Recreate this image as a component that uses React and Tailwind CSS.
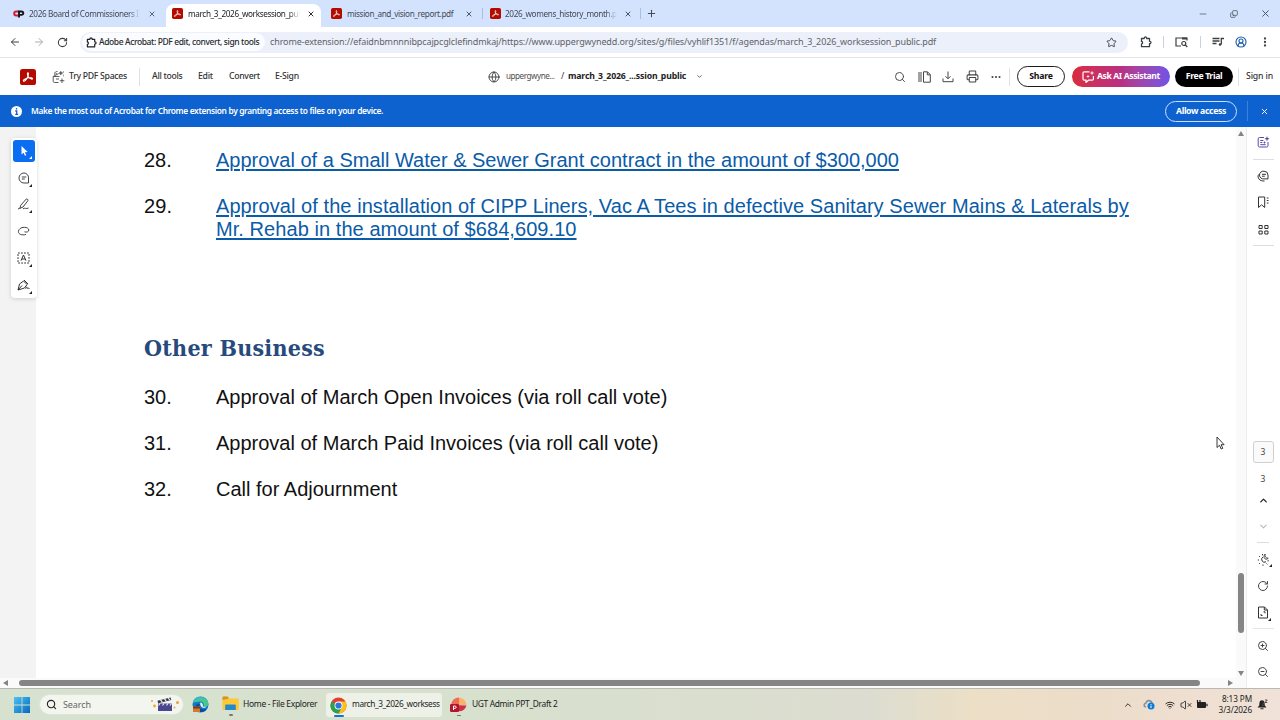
import {
    ArrowLeft, ArrowRight, RotateCw, Star, X, Plus, Minus, Copy, EllipsisVertical, ListMusic, CircleUserRound,
    Globe, ChevronDown, ChevronUp, Search, Download, Printer, Ellipsis, ZoomIn, ZoomOut, Wifi, VolumeX,
} from "lucide-react"

const agenda = [
    { n: "28.", link: true, lines: ["Approval of a Small Water & Sewer Grant contract in the amount of $300,000"] },
    { n: "29.", link: true, wide: true, lines: ["Approval of the installation of CIPP Liners, Vac A Tees in defective Sanitary Sewer Mains & Laterals by", "Mr. Rehab in the amount of $684,609.10"] },
]

const otherBusiness = [
    { n: "30.", lines: ["Approval of March Open Invoices (via roll call vote)"] },
    { n: "31.", lines: ["Approval of March Paid Invoices (via roll call vote)"] },
    { n: "32.", lines: ["Call for Adjournment"] },
]

function AcrobatLogo({ size }) {
    return (
        <svg width={size} height={size} viewBox="0 0 16 16" className="shrink-0">
            <rect width="16" height="16" rx="2.6" fill="#b30b00" />
            <path d="M3.6 12.2c-1.3-.9 2.6-3.1 5.1-3.4 1.8-.2 4 .1 3.8 1-.3 1-2.7-.2-3.9-1.7C7.4 6.6 7 3.7 7.9 3.7c1 0 .6 2.7-.5 4.9-1 2.1-2.9 4.3-3.8 3.6z" fill="none" stroke="#fff" strokeWidth="1.050" />
        </svg>
    )
}

function CpLogo() {
    return (
        <svg width="12" height="8" viewBox="0 0 12 8" className="shrink-0">
            <path d="M5.800 1.500H3.200a2 2 0 0 0 0 4H5" fill="none" stroke="#c8203c" strokeWidth="2" />
            <path d="M6 7.500V1.500h2.600a1.700 1.700 0 0 1 0 3.400H6.500" fill="none" stroke="#161616" strokeWidth="1.900" />
        </svg>
    )
}

function Puzzle({ size, stroke = "#3c4043" }) {
    return (
        <svg width={size} height={size} viewBox="0 0 12 12" fill="none" stroke={stroke} strokeWidth="1.300" strokeLinejoin="round" className="shrink-0">
            <path d="M1.500 2.500h2.700c-.1-2 2.600-2 2.500 0h2.800v2.800c1.900-.1 1.900 2.500 0 2.400v3h-8V8c1.500-.2 1.500-2.400 0-2.600z" />
        </svg>
    )
}

function SpacesIcon() {
    return (
        <svg width="13" height="14" viewBox="0 0 13 14" fill="none" stroke="#4b4b4b" strokeWidth="0.9">
            <path d="M1.200 6.500 6.800 3.500M1.200 6.500v4.700c0 .8.5 1.300 1.300 1.300h4M1.200 6.500h6.300M3 5.300C2 3 3.400 1.700 4.500 1.500h1M4.500 4.400 4 2.800M4 9h3M10 8.500v4.500M7.800 10.700h4.500" />
            <path d="M8.800 1.200l.6 1.400 1.500.5-1.500.5-.6 1.500-.6-1.500-1.200-.5 1.200-.5zM11.400 1v2M11.500 4.500v2" fill="#4b4b4b" strokeWidth="0.5" />
        </svg>
    )
}

function TabTitle({ children, className }) {
    return <span className={"whitespace-nowrap text-[8.200px] leading-[14px] tracking-[-0.37px] " + className}>{children}</span>
}

function TabStrip() {
    return (
        <div className="flex h-[27px] bg-[#d3e2fd] text-[#444a55]">
            <div className="flex items-center w-[166px] pl-[13px]">
                <CpLogo />
                <TabTitle className="ml-1 w-[111px] mask-r-from-90%">2026 Board of Commissioners I</TabTitle>
                <X size={8} strokeWidth={2.500} className="ml-2" />
            </div>
            <div className="flex items-center w-[155px] mt-1 h-[23px] pb-1 pl-[6px] bg-white rounded-t-lg text-[#202124]">
                <AcrobatLogo size={11} />
                <TabTitle className="ml-[5px] w-[112px] mask-r-from-90%">march_3_2026_worksession_pul</TabTitle>
                <X size={8} strokeWidth={2.800} className="ml-[7px]" />
            </div>
            <div className="flex items-center w-[161px] pl-[10px]">
                <AcrobatLogo size={11} />
                <TabTitle className="ml-[5px] w-[114px]">mission_and_vision_report.pdf</TabTitle>
                <X size={8} strokeWidth={2.800} className="ml-1" />
            </div>
            <div className="flex items-center w-[159px] my-2 h-[11px] pl-[7px] border-x border-[#a9bfe8]">
                <AcrobatLogo size={11} />
                <TabTitle className="ml-[4px] w-[112px] mask-r-from-90%">2026_womens_history_month.p</TabTitle>
                <X size={8} strokeWidth={2.800} className="ml-[7px]" />
            </div>
            <Plus size={11} strokeWidth={2.200} className="ml-[5px] mt-2" />
            <div className="ml-auto flex items-center w-[93px] justify-between pr-[9px]">
                <Minus size={10} strokeWidth={1.600} className="ml-[11px]" />
                <Copy size={8} strokeWidth={2.200} className="-scale-x-100 rotate-180" />
                <X size={11} strokeWidth={2} />
            </div>
        </div>
    )
}

function AddressBar() {
    return (
        <div className="flex items-center h-[31px] bg-white border-b border-[#e4e4e4] pl-[9px] text-[#3c4043]">
            <ArrowLeft size={12} strokeWidth={2} />
            <ArrowRight size={12} strokeWidth={2} className="ml-3 text-[#a8abb0]" />
            <RotateCw size={11} strokeWidth={2.300} className="ml-3" />
            <div className="ml-[12px] flex items-center w-[1048px] h-[21px] rounded-full bg-[#ebf0fa] pl-[2px]">
                <div className="flex items-center w-[183px] h-[18px] rounded-full bg-[#fafcff] pl-1 text-[#26282b]">
                    <Puzzle size={11} stroke="#202124" />
                    <span className="ml-[2px] whitespace-nowrap text-[8.500px] font-medium tracking-[-0.400px]">Adobe Acrobat: PDF edit, convert, sign tools</span>
                </div>
                <span className="ml-[5px] w-[821px] whitespace-nowrap text-[9px] tracking-[-0.120px] text-[#5f6368]">chrome-extension://efaidnbmnnnibpcajpcglclefindmkaj/https://www.uppergwynedd.org/sites/g/files/vyhlif1351/f/agendas/march_3_2026_worksession_public.pdf</span>
                <Star size={11} strokeWidth={2} className="ml-[15px]" />
            </div>
            <div className="ml-3"><Puzzle size={12} /></div>
            <div className="ml-[11px] w-px h-3 bg-[#c9d3e6]" />
            <svg width="13" height="12" viewBox="0 0 13 12" className="ml-[11px]" fill="none" stroke="#3c4043" strokeWidth="1.200">
                <path d="M6 10H1V2h11v2.500" /><path d="M7 2.500h5" strokeWidth="2" /><circle cx="8.800" cy="7.500" r="2" /><path d="m10.300 9 2 2" />
            </svg>
            <div className="ml-[12px] w-px h-3 bg-[#c9d3e6]" />
            <ListMusic size={12} strokeWidth={2.200} className="hidden" />
            <svg width="12" height="12" viewBox="0 0 12 12" className="ml-[11px]" fill="none" stroke="#3c4043" strokeWidth="1.300">
                <path d="M.5 2.500h7M.5 5h7M.5 7.500h4M9.300 8.500V2.500H12" /><circle cx="8" cy="8.500" r="1.300" fill="#3c4043" stroke="none" />
            </svg>
            <CircleUserRound size={12} strokeWidth={2.200} className="ml-[11px] text-[#1b5fa8]" />
            <EllipsisVertical size={12} strokeWidth={2.600} className="ml-3" />
        </div>
    )
}

function AcrobatBar() {
    return (
        <div className="flex items-center h-[37px] bg-white pl-5 text-[#333] text-[8.700px] whitespace-nowrap">
            <AcrobatLogo size={16} />
            <div className="ml-4 w-[13px]"><SpacesIcon /></div>
            <span className="ml-1 w-[70px] font-medium tracking-[-0.300px]">Try PDF Spaces</span>
            <div className="w-px h-[18px] bg-[#e1e1e1]" />
            <span className="ml-3 w-[46px] font-medium tracking-[-0.300px]">All tools</span>
            <span className="w-[31px] font-medium tracking-[-0.250px]">Edit</span>
            <span className="w-[46px] font-medium tracking-[-0.300px]">Convert</span>
            <span className="w-[26px] font-medium tracking-[-0.300px]">E-Sign</span>
            <Globe size={12} strokeWidth={1.700} className="ml-[187px]" />
            <span className="ml-[6px] w-[55px] text-[8.100px] tracking-[-0.450px] text-[#505050]">uppergwyne...</span>
            <span className="w-[7px]">/</span>
            <span className="w-[128px] font-bold text-[#222] text-[8.700px] tracking-[-0.160px]">march_3_2026_...ssion_public</span>
            <ChevronDown size={7} strokeWidth={2.500} />
            <div className="ml-auto flex items-center text-[#444]">
                <div className="w-6 grid place-items-center"><Search size={12} strokeWidth={1.900} /></div>
                <div className="w-6 grid place-items-center">
                    <svg width="13" height="12" viewBox="0 0 13 12" fill="none" stroke="#444" strokeWidth="1">
                        <path d="M1 1v10M3 1v10M5.500 .8h4l2.800 2.800v7.600H5.500zM9.300 1v2.800h2.800" />
                    </svg>
                </div>
                <div className="w-6 grid place-items-center">
                    <svg width="12" height="12" viewBox="0 0 12 12" fill="none" stroke="#444"><path d="M6 .5v7M3.500 5.300 6 7.800l2.500-2.500M1 7.500v3.200h10V7.500" /></svg>
                </div>
                <div className="w-6 grid place-items-center"><Printer size={13} strokeWidth={1.900} /></div>
                <div className="w-6 grid place-items-center"><Ellipsis size={12} strokeWidth={2.200} /></div>
            </div>
            <div className="ml-[1px] w-px h-[18px] bg-[#e1e1e1]" />
            <div className="ml-[7px] w-[48px] h-[21px] rounded-full border-[1.500px] border-[#1c1c1c] grid place-items-center font-bold text-[8.700px] tracking-[-0.200px] text-[#111] leading-none pb-px">Share</div>
            <div className="ml-[7px] flex items-center w-[98px] h-[21px] rounded-full bg-linear-to-r from-[#d92b3c] via-[#b92f82] to-[#7251e8] pl-[10px] text-white font-bold text-[8.600px]">
                <svg width="13" height="13" viewBox="0 0 13 13" fill="none" stroke="#fff" strokeWidth="1.200">
                    <path d="M7.500 1.800H2.300C1.500 1.800 1 2.300 1 3v6c0 .7.5 1.200 1.200 1.200H4v2.200l2.500-2.200h3.700c.7 0 1.200-.5 1.200-1.200V6" />
                    <path d="m10 .5.6 1.900 1.900.6-1.900.6L10 5.500l-.6-1.900L7.500 3l1.900-.6zM6 4.800l.5 1.200 1.200.4-1.200.5L6 8l-.5-1.100-1.200-.5L5.500 6z" fill="#fff" stroke="none" />
                </svg>
                <span className="ml-[2px] tracking-[-0.380px]">Ask AI Assistant</span>
            </div>
            <div className="ml-[5px] w-[58px] h-[21px] rounded-full bg-black grid place-items-center text-white font-bold text-[8.700px] tracking-[-0.350px]">Free Trial</div>
            <div className="ml-[5px] w-px h-[18px] bg-[#e1e1e1]" />
            <span className="ml-[7px] w-[34px] font-medium tracking-[-0.150px]">Sign in</span>
        </div>
    )
}

function Banner() {
    return (
        <div className="flex items-center h-8 bg-[#0d62d0] pl-[11px] text-white">
            <svg width="11" height="11" viewBox="0 0 11 11"><circle cx="5.500" cy="5.500" r="5.500" fill="#fff" /><path d="M5.500 2v1.500M4.300 5h1.400v3.300M4.200 8.300h2.900" stroke="#0d62d0" strokeWidth="1.300" fill="none" /></svg>
            <span className="ml-[9px] text-[8.400px] font-semibold tracking-[-0.350px] whitespace-nowrap">Make the most out of Acrobat for Chrome extension by granting access to files on your device.</span>
            <div className="ml-auto w-[72px] h-[21px] rounded-full border-[1.500px] border-[#cfe0f8] grid place-items-center text-[8.700px] font-bold tracking-[-0.350px] leading-none">Allow access</div>
            <div className="ml-[10px] w-px h-5 bg-[#3b82dc]" />
            <X size={9} strokeWidth={2.500} className="ml-3 mr-[11px]" />
        </div>
    )
}

function Corner() {
    return <svg width="3" height="3" viewBox="0 0 3 3" className="absolute right-[5px] bottom-[4px]"><path d="M3 0v3H0z" fill="#222" /></svg>
}

function ToolRail() {
    return (
        <aside className="relative z-10 w-9 shrink-0 bg-[#f3f3f3] pt-[11px]">
            <div className="ml-[11px] w-[26px] h-[160px] bg-white rounded-sm shadow-[0_1px_4px_rgba(0,0,0,0.15)] pt-[2px]">
                <div className="relative mx-auto w-[22px] h-[22px] rounded-[3px] bg-[#0b6df2] grid place-items-center">
                    <svg width="9" height="12" viewBox="0 0 9 12"><path d="M1.500 1v8.500l2-1.700 1.500 3 1.300-.6-1.400-3 2.800-.3z" fill="#fff" /></svg>
                    <svg width="3" height="3" viewBox="0 0 3 3" className="absolute right-[3px] bottom-[3px]"><path d="M3 0v3H0z" fill="#fff" /></svg>
                </div>
                <div className="relative h-[27px] mt-[2px] pr-px grid place-items-center">
                    <svg width="12" height="12" viewBox="0 0 12 12" fill="none" stroke="#444"><path d="M6 1a5 5 0 1 0 0 10h4.500V6A4.600 4.600 0 0 0 6 1zM3.800 5h4.500M3.800 7h3" /></svg>
                    <Corner />
                </div>
                <div className="relative h-[26px] pr-px grid place-items-center">
                    <svg width="13" height="12" viewBox="0 0 13 12" fill="none" stroke="#444"><path d="M9.200 1.100c.9-.6 2.300.6 1.700 1.600L6 9l-3 1.300.7-3zM1 11l2-1M6 10.800c2-1.500 3 .6 5.500-.8" /></svg>
                    <Corner />
                </div>
                <div className="h-[27px] pr-px grid place-items-center">
                    <svg width="13" height="10" viewBox="0 0 13 10" fill="none" stroke="#444"><path d="M9 8.500c-4 1-7.600-.2-7.600-2.800C1.400 3 4 1.300 7.300 1.300c2.700 0 4.500 1.200 4.500 2.700 0 1.800-2.300 2.600-4.300 1.800" /></svg>
                </div>
                <div className="relative h-[27px] pr-px grid place-items-center">
                    <svg width="13" height="12" viewBox="0 0 13 12" fill="none" stroke="#333"><rect x="1" y="1" width="11" height="10" strokeDasharray="1.800 1.200" /><path d="M4 8.700 6.500 3 9 8.700M5 7h3" /></svg>
                    <Corner />
                </div>
                <div className="relative h-[27px] pr-px grid place-items-center">
                    <svg width="13" height="12" viewBox="0 0 13 12" fill="none" stroke="#333"><path d="M1 11 2.500 5l4-3 3.500 3.500L7.500 9zM1 11l4-4.500M7 1l4 4M8.500 9.500c1-2 1.500-1.500 1.500 0 1-1 1.500 0 2.500 0" /></svg>
                    <Corner />
                </div>
            </div>
        </aside>
    )
}

function AgendaItem({ item }) {
    return (
        <div className={"flex mb-[23px] text-[20px] leading-[23px] " + (item.wide ? "tracking-[0.066px]" : "")}>
            <span className="w-[72px] shrink-0 text-[#111]">{item.n}</span>
            <div className={item.link ? "text-[#0a5ba8] underline decoration-[1.500px] underline-offset-[2px]" : "text-[#111]"}>
                {item.lines.map(line => <div key={line} className="whitespace-nowrap">{line}</div>)}
            </div>
        </div>
    )
}

function Document() {
    return (
        <main className="relative flex-1 bg-white pl-[108px] pt-[22px] font-['Liberation_Sans',Arial,sans-serif] overflow-hidden">
            {agenda.map(item => <AgendaItem key={item.n} item={item} />)}
            <h2 className="mt-[92px] mb-[23px] font-['DejaVu_Serif_Condensed','DejaVu_Serif',serif] font-bold text-[23px] leading-[30px] tracking-[0.250px] text-[#274a7d]">Other Business</h2>
            {otherBusiness.map(item => <AgendaItem key={item.n} item={item} />)}
            <svg width="9" height="14" viewBox="0 0 9 14" className="absolute left-[1180px] top-[309px]"><path d="M1 1v10.500l2.500-2.200 1.700 3.700 1.600-.7-1.700-3.600h3z" fill="#fff" stroke="#222" strokeWidth="0.900" /></svg>
        </main>
    )
}

function PageRail() {
    return (
        <aside className="flex flex-col items-center w-[34px] border-l border-[#ececec] bg-white text-[#444] text-[8.500px] pr-px">
            <svg width="13" height="12" viewBox="0 0 13 12" fill="none" stroke="#5a49a8" className="mt-[9px]">
                <path d="M7 1.500H2.500a1.300 1.300 0 0 0-1.300 1.300v7c0 .6.5 1.200 1.300 1.200h7.300c.7 0 1.200-.5 1.200-1.200V6M3.300 4.500h3M3.300 8.700h5.400M3.300 6.500h2" />
                <path d="m10 0 .7 2 2 .7-2 .7L10 5.500l-.7-2.100-2-.7 2-.7zM7.500 5l.5 1.200 1.200.3L8 7l-.5 1L7 7l-1-.5 1-.3z" fill="#5a49a8" stroke="none" />
            </svg>
            <div className="w-[21px] h-px mt-[11px] bg-[#dedede]" />
            <svg width="12" height="12" viewBox="0 0 12 12" fill="none" stroke="#333" className="mt-[10px]"><path d="M7 1.200a3.900 3.900 0 1 0 0 7.700h4V5a4 4 0 0 0-4-3.800zM5 4.300h4M5 6.200h2.800M1.500 4.500C0 8 2.500 11.300 7.500 11" /></svg>
            <svg width="12" height="13" viewBox="0 0 12 13" fill="none" stroke="#333" className="mt-[14px]"><path d="M1.500 1h6.200v10.500L4.600 8.800l-3.100 2.700zM9.800 2h1.700M9.800 4.500h1.700M9.800 7h1.700" /></svg>
            <svg width="11" height="11" viewBox="0 0 11 11" fill="none" stroke="#333" className="mt-[15px]"><path d="M1 1.500h3.200v3H1zM6.800 1.500H10v3H6.800zM1 7h3.200v3H1zM6.800 7H10v3H6.800z" /></svg>
            <div className="w-[21px] h-px mt-[10px] bg-[#dedede]" />
            <div className="mt-[195px] w-[21px] h-[22px] rounded-[3px] border border-[#d0d0d0] bg-[#fafafa] grid place-items-center">3</div>
            <span className="mt-[10px]">3</span>
            <ChevronUp size={11} strokeWidth={2.800} className="mt-[9px] text-[#222]" />
            <ChevronDown size={11} strokeWidth={2.200} className="mt-[15px] text-[#b8b8b8]" />
            <div className="w-3 h-px mt-[10px] bg-[#dedede]" />
            <div className="relative mt-[10px] h-[13px]">
                <svg width="13" height="13" viewBox="0 0 13 13" fill="none" stroke="#333"><path d="M6 4a2.800 2.800 0 1 0 3 4.800M.8 7H2M2 3l.9.900M5.500 1v1.300M2 11l.9-.9M6 11.500v1.300M9.500 10.500l.9.9M10.500 7.800h1.300" /><path d="M8.200 1c-.8 2.300.5 4 3 4.200-1.300 1.700-3.700 1.200-4.100-.8C6.900 3 7.300 1.800 8.200 1z" strokeWidth="0.900" /></svg>
                <svg width="3" height="3" viewBox="0 0 3 3" className="absolute -right-[2px] -bottom-[1px]"><path d="M3 0v3H0z" fill="#222" /></svg>
            </div>
            <RotateCw size={12} strokeWidth={2} className="mt-[14px]" />
            <div className="relative mt-[14px] h-[13px]">
                <svg width="12" height="13" viewBox="0 0 12 13" fill="none" stroke="#333"><path d="M1.500 1h6l3 3v8h-9zM7.300 1v3h3M4 9.500V8m0 1.500h1.500M8 5.800v1.500M8 5.800H6.500" /></svg>
                <svg width="3" height="3" viewBox="0 0 3 3" className="absolute -right-[2px] -bottom-[2px]"><path d="M3 0v3H0z" fill="#222" /></svg>
            </div>
            <div className="w-[21px] h-px mt-[9px] bg-[#e6e6e6]" />
            <ZoomIn size={12} strokeWidth={2} className="mt-[11px]" />
            <ZoomOut size={12} strokeWidth={2} className="mt-[14px]" />
        </aside>
    )
}

function WindowsLogo() {
    return (
        <svg width="16" height="16" viewBox="0 0 16 16">
            <defs><linearGradient id="win" x1="0" y1="0" x2="1" y2="1"><stop offset="0" stopColor="#4cc2f1" /><stop offset="1" stopColor="#0569bd" /></linearGradient></defs>
            <path d="M0 0h7.600v7.600H0zM8.400 0H16v7.600H8.400zM0 8.400h7.600V16H0zM8.400 8.400H16V16H8.400z" fill="url(#win)" />
        </svg>
    )
}

function Taskbar() {
    return (
        <footer className="flex items-center h-8 border-t border-[#b9b9b4] bg-[linear-gradient(to_right,#d6e2cf_0%,#d8e0ce_40%,#dcddd0_68%,#ecdfc6_76%,#ecdcca_86%,#f0e2d8_100%)] pl-[14px] text-[#222] text-[8.800px] whitespace-nowrap">
            <WindowsLogo />
            <div className="ml-[9px] flex items-center w-[145px] h-[21px] rounded-full bg-[#f2f6ef] border border-[#dde4d8] pl-[6px]">
                <Search size={11} strokeWidth={2.400} className="text-[#222]" />
                <span className="ml-[6px] w-[87px] text-[9px] tracking-[-0.100px] text-[#666]">Search</span>
                <svg width="30" height="15" viewBox="0 0 30 15">
                    <path d="M8 6.500h14V14H8z" fill="#4a4690" /><path d="m7.500 3.800 13-3.300.8 2.500-13.200 3.300z" fill="#35323f" />
                    <path d="m10.500 3 1.800 2M14.500 2l1.800 2M18.200 1.200l1.800 2M10 6.500l-1.500 2M14 6.500l-1.500 2M18 6.500l-1.500 2M21.500 6.500l-1.500 2" stroke="#e9e6f5" strokeWidth="1.200" />
                    <circle cx="2" cy="4" r="1.100" fill="#e5b04c" /><circle cx="4.500" cy="9" r="1.400" fill="#eda73d" /><circle cx="27.500" cy="5.500" r="1.500" fill="#e5a04c" /><circle cx="24.500" cy="10.500" r="1" fill="#e5b04c" />
                </svg>
            </div>
            <svg width="17" height="17" viewBox="0 0 17 17" className="ml-[8px]">
                <circle cx="8.500" cy="8.500" r="8" fill="#1477c9" />
                <path d="M1 6.500C2.500-.5 14-1.500 16.400 7c.6 3-2.500 4.300-5 3.300 1-1.500 0-4.700-3-4.700C5 5.600 2.500 7 1 6.500z" fill="#45c78f" />
                <path d="M1 6.500C2.500 1 8 0 11 2 7 2 3 4 1 6.500z" fill="#2fb7dc" />
                <path d="M8.300 6.500c2 0 3 2 2.500 3.300-.3 1 2 1.500 3.700.6l-1 1.200c-3 .8-5.700-1-5.200-5.100z" fill="#eef6f4" />
                <path d="M8 8c-2 3 1 6.500 6.500 5-2 4-9 4.500-11-1C3 9 5 7.500 8 8z" fill="#0d4a94" />
                <path d="M1 10.500h7V16H1z" fill="#d27a35" /><path d="M1 10.500h7v2H1z" fill="#75401d" />
            </svg>
            <div className="ml-[13px] flex flex-col items-center mt-[3px]">
                <svg width="17" height="15" viewBox="0 0 17 15"><path d="M.5 1.500C.5 1 1 .5 1.500.5h4l1.500 2h9c.5 0 .8.4.8 1V13c0 .6-.4 1-1 1H1.500c-.6 0-1-.4-1-1z" fill="#fcc836" /><path d="M.5 1.500C.5 1 1 .5 1.500.5h4L7 2.500.5 4z" fill="#d9902a" /><path d="M3.200 14V9.500c0-.6.5-1 1-1h8.600c.6 0 1 .4 1 1V14z" fill="#2488cf" /></svg>
                <div className="w-1 h-[1.500px] mt-[3px] rounded-full bg-[#777]" />
            </div>
            <span className="ml-1 w-[81px] text-[8.500px] tracking-[-0.320px]">Home - File Explorer</span>
            <div className="ml-[2px] flex items-center w-[116px] h-6 rounded-[3px] bg-[#edf1e8] pl-1">
                <div className="flex flex-col items-center mt-[4px]">
                    <svg width="17" height="17" viewBox="0 0 18 18">
                        <circle cx="9" cy="9" r="8.500" fill="#e4402f" />
                        <path d="M1.600 4.800A8.500 8.500 0 0 0 9 17.500l3.700-6.400L9 9z" fill="#2aa14c" />
                        <path d="M9 17.500A8.500 8.500 0 0 0 16.400 4.800H9L12.700 11z" fill="#fbc116" />
                        <circle cx="9" cy="9" r="4.200" fill="#fff" /><circle cx="9" cy="9" r="3.300" fill="#2f74e0" />
                    </svg>
                    <div className="w-[10px] h-[2px] mt-px rounded-full bg-[#1673d2]" />
                </div>
                <span className="ml-[5px] w-[88px] text-[8.300px] tracking-[-0.380px]">march_3_2026_worksess</span>
            </div>
            <div className="ml-2 flex flex-col items-center mt-[4px]">
                <svg width="17" height="17" viewBox="0 0 17 17"><path d="M9 .5A8 8 0 0 1 16.500 8H9z" fill="#f9b36b" /><path d="M9 .5A8 8 0 0 0 1 8.500h8z" fill="#ef6b53" /><path d="M1 8a8 8 0 0 0 15.500.5z" fill="#cf3049" /><rect x="0" y="7" width="9" height="8" rx="1.300" fill="#b3152c" /><path d="M3.500 13V9h1.300c1.900 0 1.900 2.400 0 2.400H3.500" fill="none" stroke="#fff" strokeWidth="1" /></svg>
                <div className="w-1 h-[1.500px] mt-px rounded-full bg-[#777]" />
            </div>
            <span className="ml-[5px] w-[90px] text-[8.400px] tracking-[-0.330px]">UGT Admin PPT_Draft 2</span>
            <div className="ml-auto flex items-center">
                <ChevronUp size={10} strokeWidth={2.200} />
                <svg width="12" height="11" viewBox="0 0 12 11" className="ml-[10px]"><path d="M3 8C.3 7.500.7 4.500 3 4c.7-3 5-3.300 6 0" fill="none" stroke="#8a9199" strokeWidth="1.600" /><circle cx="8" cy="7" r="3.500" fill="#0f7bd8" /><path d="M8 5v.8M8 6.500V9" stroke="#fff" /></svg>
                <Wifi size={10} strokeWidth={2.300} className="ml-[10px]" />
                <VolumeX size={12} strokeWidth={1.700} className="ml-[5px]" />
                <svg width="12" height="9" viewBox="0 0 12 9" className="ml-[4px]"><rect x="1" y="2" width="9" height="6" rx="1" fill="#222" /><path d="M11 3.800v2.400M1.500 0v3M4 0v3" stroke="#222" strokeWidth="1.200" /></svg>
                <div className="ml-[8px] w-[36px] flex flex-col items-end leading-[11px] text-[8.200px] tracking-[-0.100px] pb-[2px]"><span>8:13 PM</span><span>3/3/2026</span></div>
                <svg width="11" height="11" viewBox="0 0 11 11" className="ml-[5px] mr-[12px]"><path d="M2.500 3.500c.3-3 4.700-3 5 0l.3 3L9.500 8.500H.5l1.700-2zM3.500 9.300h3v1h-3z" fill="#222" /><path d="M5 4h2L5 6.500h2M8 1h2.300L8 3.500h2.300" fill="none" stroke="#444" strokeWidth="0.900" /></svg>
            </div>
        </footer>
    )
}

export default function App() {
    return (
        <div className="flex flex-col w-[1280px] h-[720px] overflow-hidden bg-white font-['Noto_Sans','Open_Sans',sans-serif]">
            <TabStrip />
            <AddressBar />
            <AcrobatBar />
            <Banner />
            <div className="flex h-[561px]">
                <div className="flex flex-col flex-1">
                    <div className="flex h-[551px]">
                        <ToolRail />
                        <Document />
                        <div className="flex flex-col items-center w-[10px] bg-[#fafafa]">
                            <svg width="6" height="5" viewBox="0 0 6 5" className="mt-[4px]"><path d="M3 0l3 5H0z" fill="#848484" /></svg>
                            <div className="mt-[437px] w-[6px] h-[60px] rounded-full bg-[#858585]" />
                            <svg width="6" height="5" viewBox="0 0 6 5" className="mt-[38px]"><path d="M3 5l3-5H0z" fill="#848484" /></svg>
                        </div>
                    </div>
                    <div className="flex items-center h-[10px] bg-[#fafafa] pl-[3px]">
                        <svg width="5" height="6" viewBox="0 0 5 6"><path d="M0 3l5-3v6z" fill="#848484" /></svg>
                        <div className="ml-[11px] w-[1181px] h-[6px] rounded-full bg-[#858585]" />
                        <svg width="5" height="6" viewBox="0 0 5 6" className="ml-[28px]"><path d="M5 3L0 0v6z" fill="#848484" /></svg>
                    </div>
                </div>
                <PageRail />
            </div>
            <Taskbar />
        </div>
    )
}
